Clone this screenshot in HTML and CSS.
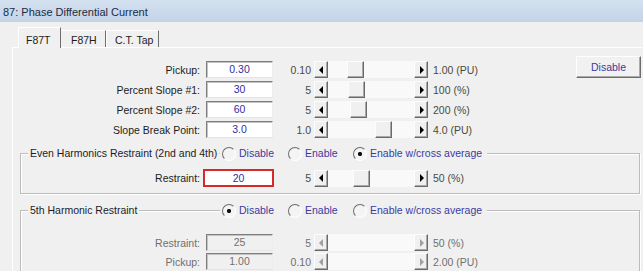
FILE: index.html
```html
<!DOCTYPE html>
<html>
<head>
<meta charset="utf-8">
<title>87: Phase Differential Current</title>
<link rel="stylesheet" href="styles.css">
</head>
<body>
<div class="titlebar">87: Phase Differential Current</div>
<div class="tabs">
  <div class="tab tab1 active">F87T</div>
  <div class="tab tab2">F87H</div>
  <div class="tab tab3">C.T. Tap</div>
</div>
<div class="panel">
  <div class="top">
    <div class="grid main">
      <div class="lbl">Pickup:</div>
      <div class="field">0.30</div>
      <div class="min">0.10</div>
      <div class="sb"><span class="sbtn left"></span><span class="track"><span class="thumb" style="margin-left:19px"></span></span><span class="sbtn right"></span></div>
      <div class="unit">1.00 (PU)</div>

      <div class="lbl">Percent Slope #1:</div>
      <div class="field">30</div>
      <div class="min">5</div>
      <div class="sb"><span class="sbtn left"></span><span class="track"><span class="thumb" style="margin-left:20px"></span></span><span class="sbtn right"></span></div>
      <div class="unit">100 (%)</div>

      <div class="lbl">Percent Slope #2:</div>
      <div class="field">60</div>
      <div class="min">5</div>
      <div class="sb"><span class="sbtn left"></span><span class="track"><span class="thumb" style="margin-left:22px"></span></span><span class="sbtn right"></span></div>
      <div class="unit">200 (%)</div>

      <div class="lbl">Slope Break Point:</div>
      <div class="field">3.0</div>
      <div class="min">1.0</div>
      <div class="sb"><span class="sbtn left"></span><span class="track"><span class="thumb" style="margin-left:47px"></span></span><span class="sbtn right"></span></div>
      <div class="unit">4.0 (PU)</div>
    </div>
    <button class="btn-disable">Disable</button>
  </div>

  <div class="group g1">
    <div class="ghead">
      <div class="gtitle-wrap"><span class="gtitle">Even Harmonics Restraint (2nd and 4th)</span></div>
      <div class="radios">
        <span class="radio r1">Disable</span>
        <span class="radio r2">Enable</span>
        <span class="radio r3 checked">Enable w/cross average</span>
      </div>
    </div>
    <div class="grid ggrid g1grid">
      <div class="lbl">Restraint:</div>
      <div class="field error">20</div>
      <div class="min">5</div>
      <div class="sb"><span class="sbtn left"></span><span class="track"><span class="thumb" style="margin-left:25px"></span></span><span class="sbtn right"></span></div>
      <div class="unit">50 (%)</div>
    </div>
  </div>

  <div class="group g2 disabled">
    <div class="ghead">
      <div class="gtitle-wrap"><span class="gtitle">5th Harmonic Restraint</span></div>
      <div class="radios">
        <span class="radio r1 checked">Disable</span>
        <span class="radio r2">Enable</span>
        <span class="radio r3">Enable w/cross average</span>
      </div>
    </div>
    <div class="grid ggrid g2grid">
      <div class="lbl">Restraint:</div>
      <div class="field">25</div>
      <div class="min">5</div>
      <div class="sb"><span class="sbtn left"></span><span class="track"></span><span class="sbtn right"></span></div>
      <div class="unit">50 (%)</div>

      <div class="lbl">Pickup:</div>
      <div class="field">1.00</div>
      <div class="min">0.10</div>
      <div class="sb"><span class="sbtn left"></span><span class="track"></span><span class="sbtn right"></span></div>
      <div class="unit">2.00 (PU)</div>
    </div>
  </div>
</div>
</body>
</html>
```
FILE: styles.css
```css
* { box-sizing: border-box; }
html, body { margin: 0; padding: 0; }
body {
  width: 643px;
  height: 271px;
  overflow: hidden;
  background: #f0f0f0;
  font-family: "Liberation Sans", Arial, sans-serif;
  font-size: 10.5px;
  color: #1c1c1c;
}

.titlebar {
  height: 22px;
  padding: 2px 0 0 3px;
  line-height: 20px;
  font-size: 11px;
  color: #1d2b40;
  background: linear-gradient(#d4e1ef, #c2d4e8);
}

.tabs {
  display: flex;
  align-items: flex-end;
  height: 25px;
  padding-left: 18px;
}
.tab {
  height: 17px;
  padding-top: 2px;
  line-height: 14px;
  border-top: 1px solid #fff;
  border-left: 1px solid #fff;
  border-right: 1px solid #6e6e6e;
  white-space: nowrap;
}
.tab.active {
  height: 21px;
  padding-top: 5px;
  margin-bottom: -1px;
  position: relative;
  z-index: 1;
  background: #f0f0f0;
}
.tab1 { width: 43px; padding-left: 7px; }
.tab2 { width: 45px; padding-left: 10px; border-left: none; }
.tab3 { width: 53px; padding-left: 8px; }

.panel {
  margin: 0 1px 0 12px;
  height: 230px;
  border-top: 1px solid #fff;
  border-left: 1px solid #fff;
}

.top {
  display: flex;
  align-items: flex-start;
  padding-top: 8px;
}
.grid {
  display: grid;
  grid-template-columns: 193px 67px 41px 114px auto;
  grid-auto-rows: 17px;
  row-gap: 3px;
  align-items: center;
}
.main { flex: 1; margin-top: 5px; }

.lbl {
  text-align: right;
  padding-right: 6px;
  white-space: nowrap;
  color: #1c1c1c;
}
.field {
  height: 17px;
  line-height: 15px;
  text-align: center;
  color: #2f2f9e;
  background: #fff;
  border: 1px solid;
  border-color: #7d7d7d #ececec #e4e4e4 #7d7d7d;
  box-shadow: inset 1px 1px 0 #c4c4c4;
}
.field.error {
  width: 71px;
  height: 18px;
  margin-left: -3px;
  line-height: 14px;
  border: 2px solid #d42a2a;
  box-shadow: none;
}
.min {
  text-align: right;
  padding-right: 3px;
  color: #4a4a3c;
}
.unit {
  padding-left: 5px;
  white-space: nowrap;
  color: #4a4a3c;
}

.sb {
  display: flex;
  height: 17px;
  width: 114px;
}
.track {
  flex: 1;
  display: flex;
  background: #f9f9f9;
}
.sbtn, .thumb {
  height: 17px;
  background: #f0f0f0;
  border: 1px solid;
  border-color: #fdfdfd #6a6a6a #6a6a6a #fdfdfd;
  box-shadow: inset -1px -1px 0 #a8a8a8;
}
.sbtn {
  width: 14px;
  display: flex;
  align-items: center;
  justify-content: center;
}
.thumb { width: 17px; }
.sbtn::after {
  content: "";
  width: 0;
  height: 0;
  border-top: 4px solid transparent;
  border-bottom: 4px solid transparent;
}
.sbtn.left::after { border-right: 4px solid #000; margin-right: 1px; }
.sbtn.right::after { border-left: 4px solid #000; margin-left: 1px; }

.btn-disable {
  width: 65px;
  height: 22px;
  margin-right: 1px;
  padding: 0;
  font: inherit;
  color: #3b3b9e;
  background: #f1f1f1;
  border: 1px solid;
  border-color: #fefefe #6c6c6c #6c6c6c #fefefe;
  box-shadow: inset -1px -1px 0 #ababab;
}

.group {
  margin: 15px 2px 0 7px;
  border: 1px solid #bcbcbc;
  box-shadow: inset 1px 1px 0 #fff, 1px 1px 0 #fff;
}
.ghead {
  display: flex;
  height: 13px;
  margin-top: -7px;
  padding-left: 7px;
  line-height: 13px;
}
.gtitle-wrap { width: 192px; }
.gtitle {
  padding: 0 2px;
  background: #f0f0f0;
  color: #1c1c28;
  white-space: nowrap;
}
.radios {
  display: flex;
  padding: 0 5px 0 2px;
  background: #f0f0f0;
}
.radio {
  display: flex;
  align-items: center;
  color: #3b3ba0;
  white-space: nowrap;
}
.radio::before {
  content: "";
  width: 12px;
  height: 12px;
  margin-right: 3px;
  border-radius: 50%;
  border: 1px solid;
  border-color: #6e6e6e #ffffff #ffffff #6e6e6e;
  background: #f4f4f4;
}
.radio.checked::before {
  background: radial-gradient(circle, #111 0 1.8px, #f4f4f4 2.4px);
}
.r1 { width: 66px; }
.r2 { width: 65px; }

.ggrid { grid-template-columns: 185px 67px 41px 114px auto; }
.g1grid { grid-auto-rows: 18px; margin-top: 9px; padding-bottom: 6px; }

.g2 { margin-top: 16px; height: 80px; }
.g2grid { row-gap: 2px; margin-top: 17px; }

.disabled .lbl,
.disabled .min,
.disabled .unit { color: #6f6f6f; }
.disabled .field {
  background: #f0f0f0;
  color: #707070;
}
.disabled .sbtn.left::after { border-right-color: #a0a0a0; }
.disabled .sbtn.right::after { border-left-color: #a0a0a0; }
```
